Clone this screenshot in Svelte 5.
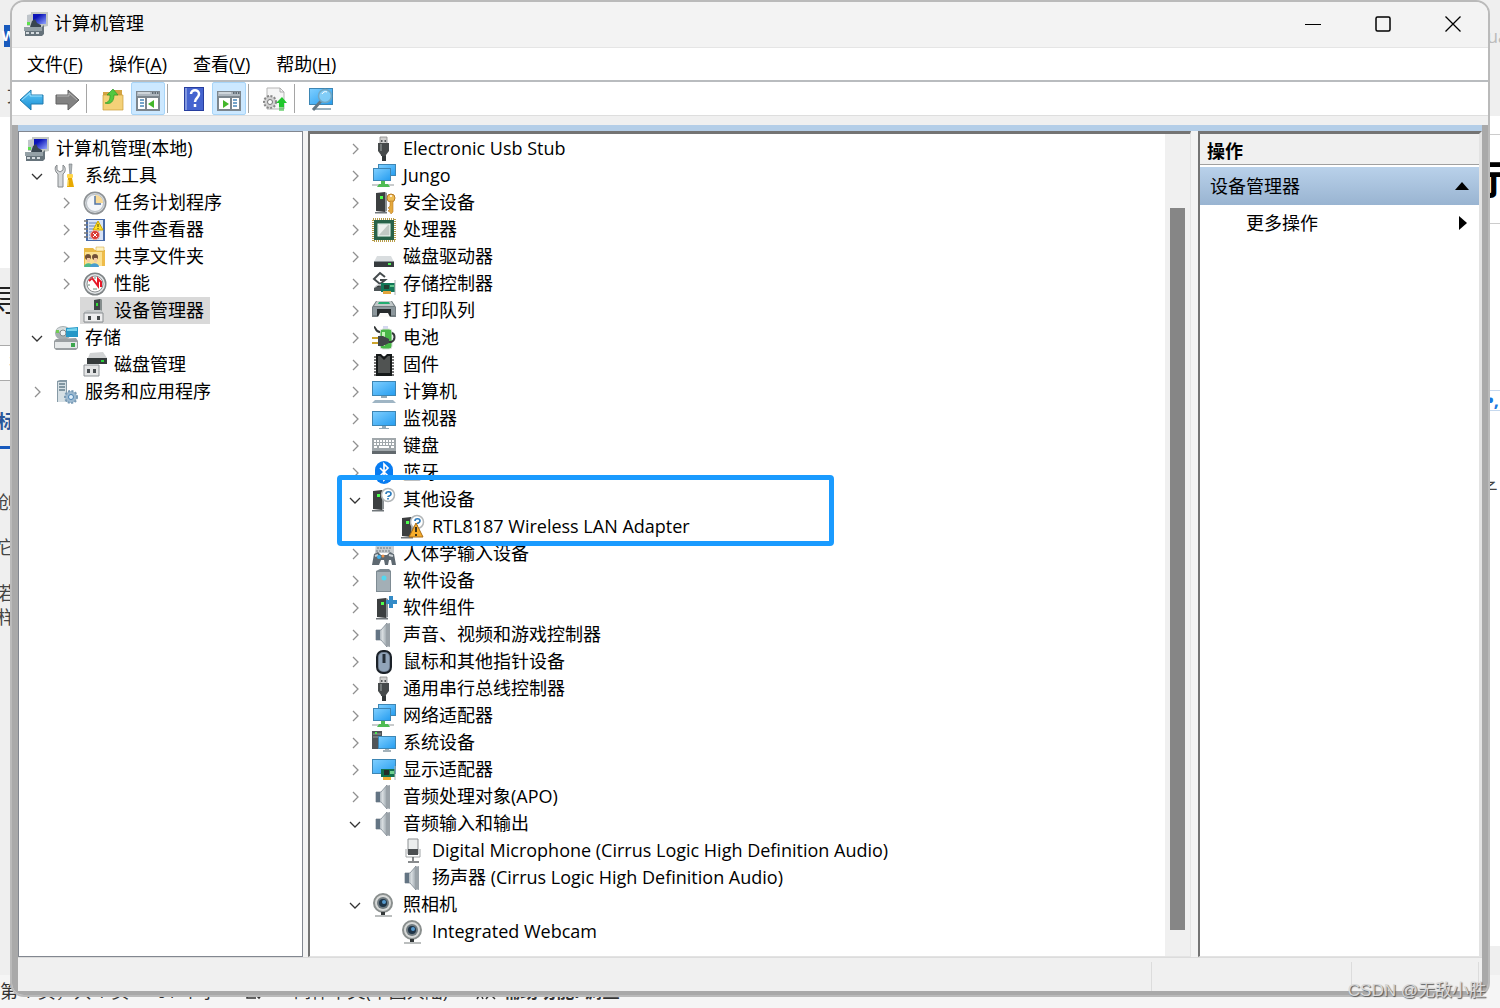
<script lang="ts">
	type Item = {
		label: string;
		icon: string;
		open?: boolean;
		closed?: boolean;
		selected?: boolean;
		marked?: boolean;
		items?: Item[];
	};

	const menus = [
		{ text: '文件', key: 'F' },
		{ text: '操作', key: 'A' },
		{ text: '查看', key: 'V' },
		{ text: '帮助', key: 'H' }
	];

	const tools = [
		[{ icon: 'back', label: '后退' }, { icon: 'forward', label: '前进' }],
		[{ icon: 'folder-up', label: '上一级' }, { icon: 'pane-left', label: '控制台树', on: true }],
		[{ icon: 'help', label: '帮助' }, { icon: 'pane-right', label: '操作窗格', on: true }],
		[{ icon: 'update', label: '更新驱动程序' }],
		[{ icon: 'scan', label: '扫描硬件改动' }]
	];

	let consoleTree: Item[] = $state([
		{ label: '系统工具', icon: 'tools', open: true, items: [
			{ label: '任务计划程序', icon: 'clock', closed: true },
			{ label: '事件查看器', icon: 'events', closed: true },
			{ label: '共享文件夹', icon: 'shared', closed: true },
			{ label: '性能', icon: 'perf', closed: true },
			{ label: '设备管理器', icon: 'devmgr', selected: true }
		] },
		{ label: '存储', icon: 'storage', open: true, items: [
			{ label: '磁盘管理', icon: 'diskmgr' }
		] },
		{ label: '服务和应用程序', icon: 'services', closed: true }
	]);

	let deviceTree: Item[] = $state([
		{ label: 'Electronic Usb Stub', icon: 'usb', closed: true },
		{ label: 'Jungo', icon: 'network', closed: true },
		{ label: '安全设备', icon: 'security', closed: true },
		{ label: '处理器', icon: 'cpu', closed: true },
		{ label: '磁盘驱动器', icon: 'disk', closed: true },
		{ label: '存储控制器', icon: 'storagectl', closed: true },
		{ label: '打印队列', icon: 'printer', closed: true },
		{ label: '电池', icon: 'battery', closed: true },
		{ label: '固件', icon: 'firmware', closed: true },
		{ label: '计算机', icon: 'computer', closed: true },
		{ label: '监视器', icon: 'monitor', closed: true },
		{ label: '键盘', icon: 'keyboard', closed: true },
		{ label: '蓝牙', icon: 'bluetooth', closed: true },
		{ label: '其他设备', icon: 'unknown', open: true, marked: true, items: [
			{ label: 'RTL8187 Wireless LAN Adapter', icon: 'warning' }
		] },
		{ label: '人体学输入设备', icon: 'hid', closed: true },
		{ label: '软件设备', icon: 'softdev', closed: true },
		{ label: '软件组件', icon: 'softcomp', closed: true },
		{ label: '声音、视频和游戏控制器', icon: 'speaker', closed: true },
		{ label: '鼠标和其他指针设备', icon: 'mouse', closed: true },
		{ label: '通用串行总线控制器', icon: 'usb', closed: true },
		{ label: '网络适配器', icon: 'network', closed: true },
		{ label: '系统设备', icon: 'system', closed: true },
		{ label: '显示适配器', icon: 'display', closed: true },
		{ label: '音频处理对象(APO)', icon: 'speaker', closed: true },
		{ label: '音频输入和输出', icon: 'speaker', open: true, items: [
			{ label: 'Digital Microphone (Cirrus Logic High Definition Audio)', icon: 'mic' },
			{ label: '扬声器 (Cirrus Logic High Definition Audio)', icon: 'speaker' }
		] },
		{ label: '照相机', icon: 'camera', open: true, items: [
			{ label: 'Integrated Webcam', icon: 'camera' }
		] }
	]);
</script>

{#snippet tower(x: number, y: number)}
	<g transform="translate({x} {y})">
		<path d="M0 1 9 0v20l-9-1z" fill="#3c3f40" />
		<path d="m9 0 2 1v18l-2 1z" fill="#8b9093" />
		<rect x="4" y="4" width="3" height="3" fill="#4dff4d" />
		<path d="M-1 20h12v1.500H-1z" fill="#70767a" />
	</g>
{/snippet}

{#snippet screen(x: number, y: number, w: number, h: number)}
	<rect {x} {y} width={w} height={h} fill="#3d86b4" />
	<rect x={x + 1} y={y + 1} width={w - 2} height={h - 2} fill="url(#g-screen)" />
{/snippet}

{#snippet icon(name: string)}
	<svg class="icon" viewBox="0 0 24 24" width="24" height="24" aria-hidden="true">
		{#if name === 'mgmt'}
			<path d="M7 0h17v14l-5 1v3h-7v-3l-5-1z" fill="#c3c8c4" />
			<path d="M9 2h13v10H9z" fill="url(#g-crt)" />
			<path d="m3 3 5-1v12H3z" fill="#bfc5ca" />
			<rect x="3" y="10" width="3" height="3" fill="#5de04c" />
			<path d="m8 9 3-2 2 4 4 2v2H6z" fill="#39454f" />
			<path d="M1 15h17l2-2v9l-2 2H1z" fill="#66737b" />
			<path d="M0 15h18v4H0z" fill="#94a0a6" />
			<path d="M2 20h3v2H2zm5 0h3v2H7zm5 0h3v2h-3z" fill="#d5dbdf" />
		{:else if name === 'tools'}
			<path d="M3 1v5l3 2 3-2V1c3 2 3 7 0 9v13H4V10C1 8 0 3 3 1z" fill="#d5d8da" stroke="#85898c" />
			<path d="M15 0h3l-1 12h-1z" fill="#b1b7ba" stroke="#737a7e" stroke-width=".6" />
			<rect x="13" y="10" width="6" height="4" rx="1" fill="#ffd54a" />
			<path d="M14 14h4l2 9h-7z" fill="#e8a900" />
			<path d="M14 16v6" stroke="#fff0a0" />
		{:else if name === 'clock'}
			<circle cx="12" cy="12" r="11.500" fill="#8d9194" />
			<circle cx="12" cy="12" r="10" fill="#d5d9dc" />
			<circle cx="12" cy="12" r="8.500" fill="#f4f6f9" stroke="#a6adb5" stroke-width=".7" />
			<path d="M12 4a8 8 0 0 1 8 8h-8z" fill="#f8d994" />
			<path d="M12 5v8h6" fill="none" stroke="#5273a0" stroke-width="1.500" />
		{:else if name === 'events'}
			<path d="M3 1h19v22H3z" fill="#486caa" />
			<path d="M5 2h15v20H5z" fill="#d8e3f5" />
			<path d="M6 5h10M6 8h10M6 11h10M6 14h10M6 17h10M6 20h10" stroke="#6483b8" />
			<path d="M1 3h4M1 7h4M1 11h4M1 15h4M1 19h4" stroke="#777" stroke-width="1.500" />
			<path d="m15 3 5 9H10z" fill="#ffe126" stroke="#d1a700" />
			<path d="M15 6v3m0 1v1" stroke="#554400" />
			<circle cx="12" cy="17" r="4.500" fill="#d83b36" stroke="#f4aaa2" />
			<path d="m10 15 4 4m0-4-4 4" stroke="#fff" />
		{:else if name === 'shared'}
			<path d="M1 3h9l2 2h10v16H1z" fill="#e9b944" />
			<path d="M13 2h8v4h-8z" fill="#fff4c3" stroke="#d7ad4e" stroke-width=".6" />
			<path d="M2 7h20v14H2z" fill="#fae092" />
			<path d="M19 7h3v14h-3z" fill="#eebc4a" />
			<path d="M1 22c0-5 9-5 9 0z" fill="#4dba87" />
			<path d="M7 22c0-5 9-5 9 0z" fill="#489dcf" />
			<circle cx="5" cy="12" r="3" fill="#725038" />
			<circle cx="12" cy="12" r="3" fill="#725038" />
			<path d="M4 13h3v4H4zm7 0h3v4h-3z" fill="#f1c9a5" />
		{:else if name === 'perf'}
			<circle cx="12" cy="12" r="11.500" fill="#7e8385" />
			<circle cx="12" cy="12" r="10" fill="#e2e5e7" />
			<circle cx="12" cy="12" r="8" fill="#fff" stroke="#8d9192" />
			<path d="M6 9 9 6l6 8V7l3 3v5" fill="none" stroke="#e71929" stroke-width="2" />
			<path d="M5 13h2m1-7 1 1m3-2v2m-2 10h4" stroke="#688a79" />
		{:else if name === 'devmgr'}
			<path d="m11 1 6-1 2 1v13h-8z" fill="#3f4646" />
			<path d="M17 0l2 1v13h-2z" fill="#858d8d" />
			<rect x="13" y="4" width="2" height="3" fill="#35dd3a" />
			<path d="m1 13 3-2h14l2 2v11H1z" fill="#c4c7c9" />
			<path d="M1 14h19v9H1z" fill="#ededee" stroke="#8a8e91" />
			<path d="M5 17h3v4H5zm9 0h3v4h-3z" fill="#424648" />
		{:else if name === 'storage'}
			<ellipse cx="9" cy="7" rx="8" ry="7" fill="#a6aeb0" />
			<path d="M2 4c4-4 10-4 13 0L9 7z" fill="#d6dddd" />
			<circle cx="9" cy="7" r="3" fill="#eff2f2" stroke="#808b8e" />
			<path d="M2 4h3v3H2z" fill="#70cc54" />
			<path d="m12 2 12-1v10H12z" fill="#2698c7" />
			<path d="m13 3 10-1v3H13z" fill="#75d3ed" />
			<path d="m2 13 20-1 2 3v7l-2 2H2l-2-2v-7z" fill="#9a9fa2" />
			<path d="M1 16h22v6H1z" fill="#e5e8e9" />
			<path d="M17 17h4v4h-4z" fill="#3da64e" />
		{:else if name === 'diskmgr'}
			<path d="m7 0 13-1 4 6v5H5V5z" fill="#d1d3d4" />
			<path d="M4 5h20v6H4z" fill="#353a3b" />
			<path d="M18 7h3v2h-3z" fill="#28d139" />
			<path d="M1 12h15v11H1z" fill="#e4e5e6" stroke="#8d9296" />
			<path d="M4 16h3v4H4zm6 0h3v4h-3z" fill="#474c50" />
		{:else if name === 'services'}
			<path d="m3 1 3-1h7v22H3z" fill="#869aa6" />
			<path d="M4 2h8v20H4z" fill="#d6e0e5" />
			<path d="M5 4h6M5 7h6M5 10h6" stroke="#657d8b" stroke-width="1.500" />
			<circle cx="17" cy="17" r="6" fill="#9bb8cf" stroke="#789ab5" stroke-dasharray="2 1.500" stroke-width="2" />
			<circle cx="17" cy="17" r="2.500" fill="#dfeffb" stroke="#4b83b3" />
		{:else if name === 'usb'}
			<path d="M8 0h7v7H8z" fill="#d0d0cf" stroke="#888" stroke-width=".8" />
			<path d="M9 3h1.500v2H9zm3.500 0H14v2h-1.500z" fill="#55595a" />
			<path d="M6 6h11v8l-3 4v1H9v-1l-3-4z" fill="#464a4b" />
			<path d="M8 7h2v7H8z" fill="#737979" />
			<path d="M10 19h4v5h-4z" fill="#333738" />
		{:else if name === 'network'}
			{@render screen(6, 0, 18, 12)}
			{@render screen(1, 4, 18, 13)}
			<path d="M0 20h22v2H0z" fill="#c8cbcc" />
			<path d="M9 17h4v3h3l2 3H5l2-3h2z" fill="#50bc53" />
		{:else if name === 'security'}
			{@render tower(4, 1)}
			<circle cx="19" cy="7" r="4" fill="#eebd54" stroke="#b97c26" />
			<circle cx="19" cy="5" r="1" fill="#fff" />
			<path d="M18 10h3v11l-2 2-1-2-2-1 2-2-2-1 2-2z" fill="#e5a93c" stroke="#b97c26" stroke-width=".6" />
		{:else if name === 'cpu'}
			<rect x="1" y="1" width="22" height="22" fill="none" stroke="#b69c48" stroke-width="2" stroke-dasharray="1 1" />
			<rect x="2" y="2" width="20" height="20" fill="#286249" />
			<rect x="6" y="6" width="12" height="12" fill="#c2c9c5" stroke="#f4fff9" />
			<path d="M7 17V7h9z" fill="#eef1ef" />
		{:else if name === 'disk'}
			<path d="M5 11h14l3 6H2z" fill="#d9dddf" />
			<path d="M2 16h20v6H2z" fill="#363b3e" />
			<path d="M2 16h20v1H2z" fill="#868e92" />
			<path d="M16 18h3v2h-3z" fill="#50ec58" />
		{:else if name === 'storagectl'}
			<path d="m13 5-5-4-6 6 6 5 5-4H8" fill="none" stroke="#454b4d" stroke-width="2" />
			<path d="m2 16 4-3h9v6H2z" fill="#4d5456" />
			<path d="m3 15 3-2h8" stroke="#cbd0d1" stroke-width="1.500" />
			<path d="M9 11h14v9H9z" fill="#147858" />
			<path d="M12 13h5v4h-5z" fill="#243f32" />
			<path d="M18 13h4v2h-4z" fill="#61c68b" />
			<path d="M11 19h8v3h-8z" fill="#e1a53c" />
			<path d="M23 8v15" stroke="#aeb4b5" />
		{:else if name === 'printer'}
			<path d="m4 2 16 0 4 6v10H0V8z" fill="#737d81" />
			<path d="m5 2 14 0 3 5H2z" fill="#c2c9ca" />
			<path d="M7 3h10l1 2H6z" fill="#22ad71" />
			<path d="M1 8h22v8H1z" fill="#8c979c" />
			<path d="M5 10h14v7H5z" fill="#262b2d" />
			<path d="m8 14 8 0 2 4H6z" fill="#fafafa" />
		{:else if name === 'battery'}
			<path d="M11 0h5v4h-5z" fill="#d5d8f0" />
			<rect x="8" y="3" width="12" height="20" rx="3" fill="#48b747" stroke="#d6dfd8" />
			<path d="M10 6h3v14h-3z" fill="#c2f5b7" />
			<path d="M2 1c2 0 1 5 6 5M16 16h3c5-2 4-8 1-9" fill="none" stroke="#343839" stroke-width="2" />
			<path d="M0 12h7M0 17h7" stroke="#cda52d" stroke-width="2" />
			<path d="M6 10h5l6 3v4l-6 3H6z" fill="#404647" />
		{:else if name === 'firmware'}
			<path d="M2 4h20M2 7h20M2 10h20M2 13h20M2 16h20M2 19h20M2 22h20" stroke="#777" stroke-width="2" />
			<path d="M4 1h5l3 3 3-3h5v22H4z" fill="#151919" />
			<path d="M6 3h2l4 4 4-4h2v17H6z" fill="#505352" />
		{:else if name === 'computer'}
			{@render screen(0, 1, 24, 15)}
			<path d="M9 16h6v2H9z" fill="#95aab6" />
			<path d="m3 20 18 0 3 3H0z" fill="#9fb5c4" />
		{:else if name === 'monitor'}
			{@render screen(0, 4, 24, 15)}
			<path d="M10 19h4v2h3v1H7v-1h3z" fill="#90a9b8" />
		{:else if name === 'keyboard'}
			<path d="M0 4h24v16H0z" fill="#a0a7ab" />
			<path d="M0 17h24v3H0z" fill="#62696d" />
			<path d="M2 7h20M2 10h20" stroke="#fff" stroke-width="2" stroke-dasharray="2 1" />
			<path d="M2 13h3m2 0h10m2 0h3" stroke="#fff" stroke-width="2" />
		{:else if name === 'bluetooth'}
			<rect x="3" y="0" width="18" height="23" rx="9" fill="#087cf1" />
			<path d="m8 7 8 8-4 4V3l4 4-8 8" fill="none" stroke="#fff" stroke-width="1.700" />
		{:else if name === 'unknown' || name === 'warning'}
			{@render tower(1, 2)}
			<circle cx="16" cy="7" r="6.500" fill="#fff" stroke="#b2b6b8" stroke-width="1.500" />
			<path d="M14 6c0-3 5-3 5 0 0 2-3 2-3 3m0 1v1.500" fill="none" stroke="#2b7abc" stroke-width="1.700" />
			{#if name === 'warning'}
				<path d="m15 8 7 14H8z" fill="#f7ad2c" stroke="#a96c17" stroke-linejoin="round" />
				<path d="M15 12v5m0 2v2" stroke="#3d3219" stroke-width="2" />
			{/if}
		{:else if name === 'hid'}
			<path d="M4 0h18v11H3z" fill="#c8cdd0" />
			<path d="M5 3h15M5 6h15M4 9h15" stroke="#73797e" stroke-dasharray="2 1" />
			<path d="M0 23 2 12l4-2 3 3h6l3-3 4 2 2 11h-4l-1-5h-2l-1 5h-3l-1-5h-3l-2 5z" fill="#5e6971" />
			<path d="m3 14 3-1M17 13l4 1" stroke="#ccd3d7" stroke-width="2" />
			<circle cx="7" cy="15" r="2" fill="#3faee9" />
			<circle cx="11" cy="14" r="1.500" fill="#e9914b" />
		{:else if name === 'softdev'}
			<path d="m4 2 4-2h9l2 2v21H4z" fill="#7e8b93" />
			<path d="M5 3h13v19H5z" fill="#a3afb6" />
			<circle cx="12" cy="9" r="2.500" fill="#53d8ef" />
		{:else if name === 'softcomp'}
			{@render tower(5, 2)}
			<path d="M17 0h4v4h4v4h-4v4h-4V8h-3V4h3z" fill="#348bc7" />
		{:else if name === 'speaker'}
			<path d="m4 7 5 0 6-7v24l-6-7H4z" fill="url(#g-steel)" stroke="#717d87" stroke-width=".7" />
			<path d="M4 7h4v10H4z" fill="#637483" />
			<path d="m14 1 4-1v24l-4-1z" fill="#9aa2a8" />
		{:else if name === 'mouse'}
			<rect x="5" y="1" width="14" height="22" rx="6" fill="#707e91" stroke="#1b2128" stroke-width="2" />
			<rect x="7" y="3" width="10" height="18" rx="4" fill="#91a4b9" />
			<path d="M12 4v9" stroke="#252e38" stroke-width="3" />
		{:else if name === 'system'}
			<path d="M0 0h10v18H0z" fill="#505558" />
			<path d="M1 3h8M1 6h8" stroke="#9aa0a2" />
			<path d="M3 1h2v2H3z" fill="#4ce851" />
			{@render screen(6, 5, 18, 13)}
			<path d="M13 18h4v1h2v2h-8v-2h2z" fill="#a4b2ba" />
		{:else if name === 'display'}
			{@render screen(0, 1, 24, 15)}
			<path d="M9 11h14v8H9z" fill="#11704d" />
			<path d="M12 12h5v5h-5z" fill="#262e29" />
			<path d="M18 13h4v3h-4z" fill="#6fd08e" />
			<path d="M11 19h8v3h-8z" fill="#efad31" />
			<path d="M23 8v14" stroke="#b0b8b8" />
		{:else if name === 'mic'}
			<path d="M7 0h10v15H7z" fill="#eceeee" stroke="#8d9193" />
			<path d="M7 10h10v6H7z" fill="#4b4f51" />
			<path d="M5 10v8h14v-8" fill="none" stroke="#a0a4a6" />
			<path d="M12 18v4m-5 1h11" stroke="#616668" stroke-width="1.500" />
		{:else if name === 'camera'}
			<circle cx="11" cy="10" r="9" fill="#d6d8d7" stroke="#8a8f8e" stroke-width="2" />
			<circle cx="11" cy="10" r="6" fill="#707b80" />
			<circle cx="11" cy="10" r="4" fill="#1f3447" />
			<circle cx="12" cy="9" r="2" fill="#5699cd" />
			<path d="M9 19h4v3H9z" fill="#34393a" />
			<path d="M3 23h17" stroke="#a5a9a9" stroke-width="1.500" />
		{:else if name === 'back' || name === 'forward'}
			<g transform={name === 'forward' ? 'matrix(-1 0 0 1 24 0)' : undefined}>
				<path
					d="M0 13 11 3v5h12v9H11v6z"
					fill={name === 'back' ? 'url(#g-back)' : '#828282'}
					stroke={name === 'back' ? '#217bae' : '#626262'}
					stroke-linejoin="round"
				/>
				<path d="m2 13 8-7v3h12" fill="none" stroke={name === 'back' ? '#9de1ff' : '#b5b5b5'} />
			</g>
		{:else if name === 'folder-up'}
			<path d="M2 5h8l2-2h9v20H2z" fill="#d3a443" />
			<path d="M2 8h20v15H2z" fill="#f4d178" stroke="#c99b38" stroke-width=".7" />
			<path d="M4 16c5-1 5-5 5-8H6l6-6 5 6h-4c0 6-3 10-9 8z" fill="#52c840" stroke="#309a25" stroke-width=".7" />
		{:else if name === 'pane-left' || name === 'pane-right'}
			<path d="M0 4h24v20H0z" fill="#7c868e" />
			<path d="M1 5h22v4H1z" fill="#aeb7bf" />
			<path d="M2 6h12" stroke="#eff4f7" />
			<path d="M16 6h1.500m1 0H20m1 0h1.500" stroke="#44515b" stroke-width="1.500" />
			<path d="M2 11h20v11H2z" fill="#fff" />
			<g transform={name === 'pane-right' ? 'matrix(-1 0 0 1 24 0)' : undefined}>
				<path d="M10 10v13" stroke="#7c868e" stroke-width="2" />
				<path d="M4 13h4m-4 3h4m-4 3h4" stroke="#4988ba" stroke-width="1.500" />
				<path d="m18 13-6 4 6 4z" fill="#43b72b" />
			</g>
		{:else if name === 'help'}
			<path d="M2 0h20v24H2z" fill="#263d9e" />
			<path d="M5 1h16v22H5z" fill="#4564cf" />
			<path d="M3 1h2v22H3z" fill="#8298df" />
			<path d="M9 7c0-5 8-5 8 0 0 4-4 4-4 8m0 2v3" fill="none" stroke="#fff" stroke-width="2.500" />
		{:else if name === 'update'}
			<path d="M4 1h13l4 4v17H4z" fill="#f5f5f5" stroke="#b5b5b5" />
			<path d="M17 1v4h4" fill="none" stroke="#aaa" />
			<circle cx="7" cy="15" r="6" fill="#d2d2d2" stroke="#888" stroke-width="2" stroke-dasharray="2 1.500" />
			<circle cx="7" cy="15" r="2.500" fill="#fff" stroke="#777" />
			<path d="m19 10 5 6h-3v4h-5v-4h-3z" fill="#20c72d" />
			<path d="M16 21h5m-5 2h5" stroke="#20b92a" />
		{:else if name === 'scan'}
			{@render screen(0, 1, 24, 17)}
			<path d="M4 22h18" stroke="#9ab0bd" stroke-width="2" />
			<path d="m12 14-8 9" stroke="#657782" stroke-width="3" />
			<circle cx="16" cy="9" r="6.500" fill="#8ed3f7" fill-opacity=".8" stroke="#71a7c4" stroke-width="1.500" />
			<path d="M13 7c1-2 3-3 5-2" fill="none" stroke="#fff" />
		{/if}
	</svg>
{/snippet}

{#snippet branch(items: Item[])}
	{#each items as item}
		<li class:marked={item.marked}>
			<div class="row">
				{#if item.items || item.closed}
					<button
						class="chevron"
						class:open={item.open}
						aria-label={item.label}
						aria-expanded={!!item.open}
						onclick={() => { if (item.items) item.open = !item.open; }}
					>
						<svg viewBox="0 0 12 12" width="12" height="12" aria-hidden="true">
							<path d="m4 1 5 5-5 5" fill="none" stroke="currentColor" stroke-width="1.300" />
						</svg>
					</button>
				{:else}
					<span class="chevron"></span>
				{/if}
				<span class="node" class:selected={item.selected}>
					{@render icon(item.icon)}
					<span>{item.label}</span>
				</span>
			</div>
			{#if item.open && item.items}
				<ul>{@render branch(item.items)}</ul>
			{/if}
		</li>
	{/each}
{/snippet}

<svg class="defs" width="0" height="0" aria-hidden="true">
	<defs>
		<linearGradient id="g-screen" x1="0" y1="0" x2="1" y2="1">
			<stop offset="0" stop-color="#7dceff" />
			<stop offset="1" stop-color="#279ef0" />
		</linearGradient>
		<linearGradient id="g-crt" x1="0" y1="0" x2="1" y2="1">
			<stop offset=".3" stop-color="#0b14b8" />
			<stop offset="1" stop-color="#93a6ff" />
		</linearGradient>
		<linearGradient id="g-steel">
			<stop offset="0" stop-color="#74818b" />
			<stop offset=".6" stop-color="#d8dde0" />
			<stop offset="1" stop-color="#99a3aa" />
		</linearGradient>
		<linearGradient id="g-back" x1="0" y1="0" x2="0" y2="1">
			<stop offset="0" stop-color="#63ccfa" />
			<stop offset="1" stop-color="#178bd2" />
		</linearGradient>
	</defs>
</svg>

<div class="desktop">
	<div class="doc-left" aria-hidden="true">
		<div class="doc-top">
			<span class="word">W</span>
			<span class="tab">文</span>
		</div>
		<div class="doc-blank"></div>
		<div class="doc-nav">
			<span class="heading">导</span>
			<span class="search">在</span>
			<span class="active">标</span>
			<span class="line">创</span>
			<span class="line">它</span>
			<span class="line last">若<br />样</span>
		</div>
	</div>
	<div class="doc-right" aria-hidden="true">
		<div class="user">ua</div>
		<div class="gap"></div>
		<div class="title">示</div>
		<div class="dots">•,</div>
		<div class="body">子</div>
		<div class="foot"></div>
	</div>
	<div class="doc-status" aria-hidden="true">
		<span>第 1 页，共 1 页</span>
		<span>61 个字</span>
		<svg viewBox="0 0 22 18" width="22" height="18">
			<path d="M2 2v13h9m-1-4 4 4 6-8" fill="none" stroke="#333" stroke-width="1.500" />
		</svg>
		<span class="lang">简体中文(中国大陆)</span>
		<svg viewBox="0 0 22 18" width="22" height="18">
			<path d="M5 3v8l-3 5m3-6 3 6m3 0 8-10m-7 2 8 8" fill="none" stroke="#333" stroke-width="1.500" />
		</svg>
		<b>辅助功能: 调查</b>
	</div>

	<main class="window">
		<header class="titlebar">
			{@render icon('mgmt')}
			<h1>计算机管理</h1>
			<div class="controls">
				<button aria-label="最小化">
					<svg viewBox="0 0 16 16" width="16" height="16"><path d="M0 8.500h16" stroke="#000" /></svg>
				</button>
				<button aria-label="最大化">
					<svg viewBox="0 0 16 16" width="16" height="16">
						<rect x="1" y="1" width="14" height="14" rx="1.500" fill="none" stroke="#000" stroke-width="1.500" />
					</svg>
				</button>
				<button aria-label="关闭">
					<svg viewBox="0 0 16 16" width="16" height="16">
						<path d="m.5.5 15 15m0-15-15 15" stroke="#000" stroke-width="1.300" />
					</svg>
				</button>
			</div>
		</header>

		<nav class="menubar">
			{#each menus as menu}
				<button>{menu.text}(<u>{menu.key}</u>)</button>
			{/each}
		</nav>

		<div class="toolbar">
			{#each tools as group, i}
				{#if i > 0}<span class="sep"></span>{/if}
				{#each group as tool}
					<button class:on={'on' in tool} aria-label={tool.label}>{@render icon(tool.icon)}</button>
				{/each}
			{/each}
		</div>

		<div class="frame">
			<div class="strip"></div>
			<div class="panes">
				<section class="pane console">
					<ul class="tree">
						<li>
							<div class="row">
								<span class="node">{@render icon('mgmt')}<span>计算机管理(本地)</span></span>
							</div>
							<ul class="root">{@render branch(consoleTree)}</ul>
						</li>
					</ul>
				</section>

				<section class="pane devices">
					<ul class="tree">{@render branch(deviceTree)}</ul>
					<div class="scrollbar"><div class="thumb"></div></div>
				</section>

				<section class="pane actions">
					<h2>操作</h2>
					<button class="group">
						设备管理器
						<svg viewBox="0 0 14 8" width="14" height="8"><path d="m0 8 7-8 7 8z" /></svg>
					</button>
					<button class="more">
						更多操作
						<svg viewBox="0 0 8 14" width="8" height="14"><path d="m0 0 8 7-8 7z" /></svg>
					</button>
				</section>
			</div>
			<footer class="statusbar">
				<span></span><span></span><span></span><span></span>
			</footer>
		</div>
	</main>

	<div class="watermark">CSDN @无敌小胜</div>
</div>

<style>
	:global(body) {
		margin: 0;
	}

	.desktop {
		position: relative;
		display: flex;
		flex-direction: column;
		min-height: 100vh;
		overflow: hidden;
		background: #efefef;
		color: #000;
		font-family: "Open Sans", "Noto Sans CJK SC", sans-serif;
		font-size: 18px;
		line-height: 27px;
	}

	.defs {
		position: absolute;
	}

	button {
		padding: 0;
		border: 0;
		background: none;
		color: inherit;
		font: inherit;
	}

	ul {
		margin: 0;
		padding: 0;
		list-style: none;
	}

	.icon {
		display: block;
		flex: none;
		overflow: visible;
	}

	/* window */
	.window {
		position: relative;
		display: flex;
		flex: 1;
		flex-direction: column;
		margin: 0 10px 11px;
		border: 2px solid #bababa;
		border-radius: 14px;
		overflow: hidden;
		background: #f0f0f0;
	}

	.titlebar {
		display: flex;
		box-sizing: border-box;
		align-items: center;
		height: 45px;
		padding: 0 0 2px 12px;
		background: #f3f3f3;
	}

	h1 {
		flex: 1;
		margin: 0 0 0 6px;
		font-size: 18px;
		font-weight: 400;
	}

	.controls {
		display: flex;
	}

	.controls button {
		display: grid;
		place-items: center;
		width: 70px;
		height: 42px;
	}

	.menubar {
		display: flex;
		gap: 26px;
		height: 32px;
		padding-left: 15px;
		border-top: 1px solid #e5e5e5;
		border-bottom: 2px solid #b9bcbf;
		background: #fff;
	}

	.menubar u {
		text-decoration-thickness: 1px;
		text-underline-offset: 2px;
	}

	.toolbar {
		display: flex;
		gap: 1px;
		height: 33px;
		padding-left: 3px;
		border-bottom: 1px solid #dedede;
		background: #fff;
	}

	.toolbar button {
		display: grid;
		box-sizing: border-box;
		place-items: center;
		width: 34px;
		border: 1px solid transparent;
		border-radius: 2px;
	}

	.toolbar .on {
		border-color: #a8d5f8;
		background: #cce8ff;
	}

	.sep {
		width: 1px;
		margin: 2px 8px 2px 1px;
		background: #a5a5a5;
	}

	.frame {
		display: flex;
		flex: 1;
		flex-direction: column;
		margin-top: 9px;
		padding: 0 6px 4px;
		background: #a9a9a9;
	}

	.strip {
		height: 6px;
		background: #b4cee8;
	}

	.panes {
		display: grid;
		flex: 1;
		grid-template-columns: 285px minmax(0, 1fr) 284px;
		gap: 5px;
		background: #f3f3f3;
	}

	.pane {
		box-sizing: border-box;
		background: #fff;
	}

	.console {
		padding: 3px 0 0 3px;
		border: 1px solid #828790;
	}

	.devices {
		display: flex;
		margin-right: 2px;
		border: 1px solid #e3e3e3;
		border-top: 3px solid #747474;
		border-left: 2px solid #747474;
	}

	.devices .tree {
		flex: 1;
		padding: 1px 0 0 33px;
	}

	/* tree */
	.row {
		display: flex;
		height: 27px;
		white-space: nowrap;
	}

	.root {
		padding-left: 3px;
	}

	.tree li ul:not(.root) {
		padding-left: 29px;
	}

	.chevron {
		display: grid;
		flex: none;
		place-items: center;
		width: 24px;
		margin-right: 2px;
		color: #909090;
	}

	.open {
		color: #333;
	}

	.open svg {
		transform: rotate(90deg);
	}

	.node {
		display: flex;
		align-items: center;
		gap: 7px;
		padding: 0 6px 0 3px;
	}

	.selected {
		background: #d9d9d9;
	}

	.marked {
		position: relative;
	}

	.marked::after {
		content: "";
		position: absolute;
		top: -11px;
		bottom: -6px;
		left: -6px;
		box-sizing: border-box;
		width: 497px;
		border: 5px solid #1a9bff;
		border-radius: 4px;
		pointer-events: none;
	}

	.scrollbar {
		display: flex;
		box-sizing: border-box;
		width: 25px;
		padding: 74px 5px 26px;
		background: #f0f0f0;
	}

	.thumb {
		flex: 1;
		background: #868686;
	}

	/* actions */
	.actions {
		border: 1px solid #e3e3e3;
		border-width: 3px 3px 1px 2px;
		border-top-color: #747474;
		border-left-color: #747474;
	}

	h2 {
		height: 30px;
		margin: 0 0 2px;
		padding-left: 7px;
		border-bottom: 1px solid #a0a0a0;
		background: #f0f0f0;
		font-size: 18px;
		font-weight: 700;
		line-height: 34px;
	}

	.group,
	.more {
		display: flex;
		box-sizing: border-box;
		align-items: center;
		justify-content: space-between;
		width: 100%;
		height: 38px;
		padding: 0 10px;
	}

	.group {
		background: linear-gradient(#b9d1ea, #99b4d1);
	}

	.more {
		height: 36px;
		padding: 0 12px 0 46px;
	}

	.statusbar {
		display: grid;
		grid-template-columns: 1fr 200px 127px 4px;
		box-sizing: border-box;
		height: 34px;
		padding-top: 4px;
		border-top: 1px solid #dcdcdc;
		background: #f0f0f0;
	}

	.statusbar span + span {
		border-left: 1px solid #dcdcdc;
	}

	/* document behind the window */
	.doc-left,
	.doc-right {
		position: absolute;
		top: 0;
		bottom: 33px;
		width: 13px;
		overflow: hidden;
	}

	.doc-left {
		left: 0;
	}

	.doc-left span {
		display: flex;
		justify-content: center;
		color: #444;
	}

	.doc-top {
		box-sizing: border-box;
		height: 117px;
		padding-top: 25px;
	}

	.doc-left .word {
		height: 22px;
		margin: 0 0 35px 4px;
		background: #185abd;
		color: #fff;
		font-size: 14px;
		font-weight: 700;
		line-height: 22px;
	}

	.doc-left .tab {
		padding-left: 16px;
	}

	.doc-blank {
		height: 151px;
		background: #fff;
	}

	.doc-left .heading {
		height: 77px;
		color: #222;
		font-size: 30px;
		line-height: 64px;
	}

	.doc-left .search {
		height: 34px;
		padding-left: 18px;
		border: solid #aaa;
		border-width: 1px 0;
		background: #fff;
		color: #777;
		line-height: 34px;
	}

	.doc-left .active {
		height: 38px;
		padding-top: 27px;
		border-bottom: 3px solid #185abd;
		color: #2b579a;
		font-weight: 700;
	}

	.doc-left .line {
		padding-top: 18px;
	}

	.doc-left .line:nth-of-type(4) {
		padding-top: 40px;
	}

	.doc-left .last {
		padding-top: 20px;
		line-height: 24px;
	}

	.doc-right {
		right: 0;
		background: #fff;
	}

	.user {
		height: 93px;
		padding-top: 23px;
		background: #efefef;
		color: #bbb;
	}

	.gap {
		height: 18px;
		border-bottom: 1px solid #ccc;
	}

	.title {
		display: flex;
		justify-content: center;
		height: 88px;
		border-bottom: 1px solid #ccc;
		font-size: 40px;
		font-weight: 700;
		line-height: 88px;
	}

	.dots {
		height: 19px;
		margin-top: 166px;
		border: solid #c5d8ee;
		border-width: 1px 0;
		color: #1a78e0;
		font-weight: 700;
		line-height: 19px;
	}

	.body {
		display: flex;
		justify-content: center;
		height: 457px;
		padding-top: 65px;
		margin-right: 10px;
		color: #444;
	}

	.foot {
		height: 30px;
		margin-top: 13px;
		background: #efefef;
	}

	.doc-status {
		position: absolute;
		right: 0;
		bottom: 0;
		left: 0;
		display: flex;
		align-items: center;
		gap: 27px;
		height: 33px;
		background: #f5f5f5;
		color: #333;
		white-space: nowrap;
	}

	.doc-status svg + b {
		margin-left: -22px;
	}

	.watermark {
		position: absolute;
		right: 14px;
		bottom: 4px;
		color: #d8d8d8;
		font-family: "Liberation Sans", "Noto Sans CJK SC", sans-serif;
		font-size: 17px;
		text-shadow: 1px 1px 1px #555;
		white-space: nowrap;
	}
</style>
